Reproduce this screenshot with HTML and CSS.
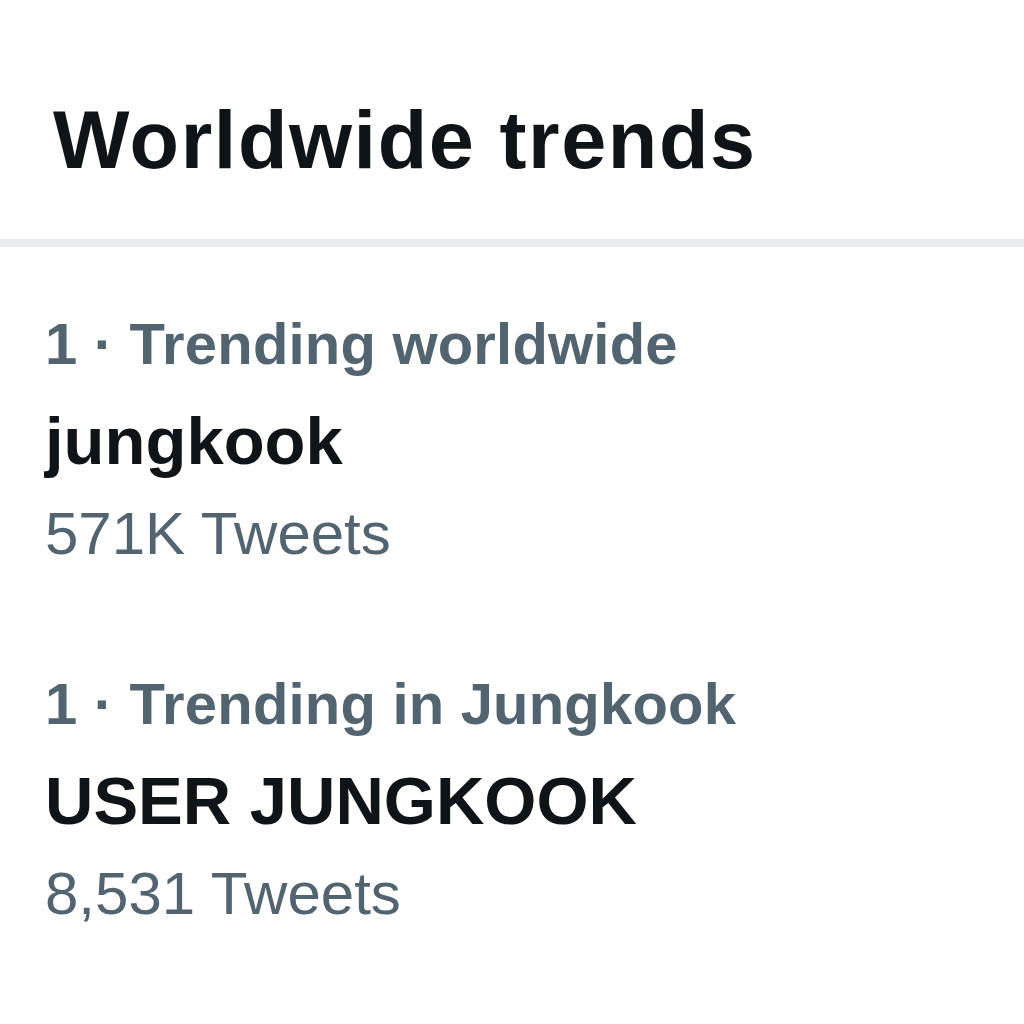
FILE: index.html
```html
<!DOCTYPE html>
<html>
<head>
<meta charset="utf-8">
<link rel="stylesheet" href="styles.css">
</head>
<body>
<div class="page">
  <header class="header">
    <h1 class="title">Worldwide trends</h1>
  </header>
  <div class="divider"></div>
  <ul class="trends">
    <li class="trend">
      <div class="meta">1 · Trending worldwide</div>
      <div class="name">jungkook</div>
      <div class="count">571K Tweets</div>
    </li>
    <li class="trend">
      <div class="meta">1 · Trending in Jungkook</div>
      <div class="name">USER JUNGKOOK</div>
      <div class="count">8,531 Tweets</div>
    </li>
  </ul>
</div>
</body>
</html>
```
FILE: styles.css
```css
html, body {
  margin: 0;
  padding: 0;
  background: #ffffff;
}
.page {
  width: 1024px;
  height: 1024px;
  font-family: "Liberation Sans", Arial, sans-serif;
  overflow: hidden;
}
.header {
  padding: 95px 0 0 53px;
}
.title {
  margin: 0;
  font-size: 81px;
  line-height: 90px;
  font-weight: 700;
  color: #0f1419;
  letter-spacing: 1.6px;
}
.divider {
  height: 8px;
  margin-top: 54px;
  background: #ebeced;
}
.trends {
  list-style: none;
  margin: 0;
  padding: 62px 0 0 45px;
  display: flex;
  flex-direction: column;
  gap: 100px;
}
.trend {
  display: flex;
  flex-direction: column;
}
.meta {
  font-size: 58px;
  line-height: 70px;
  font-weight: 700;
  color: #536471;
  margin-bottom: 22px;
  letter-spacing: 0.2px;
}
.name {
  font-size: 67px;
  line-height: 80px;
  font-weight: 700;
  color: #0f1419;
  margin-bottom: 18px;
}
.count {
  font-size: 60px;
  line-height: 70px;
  color: #536471;
}
```
